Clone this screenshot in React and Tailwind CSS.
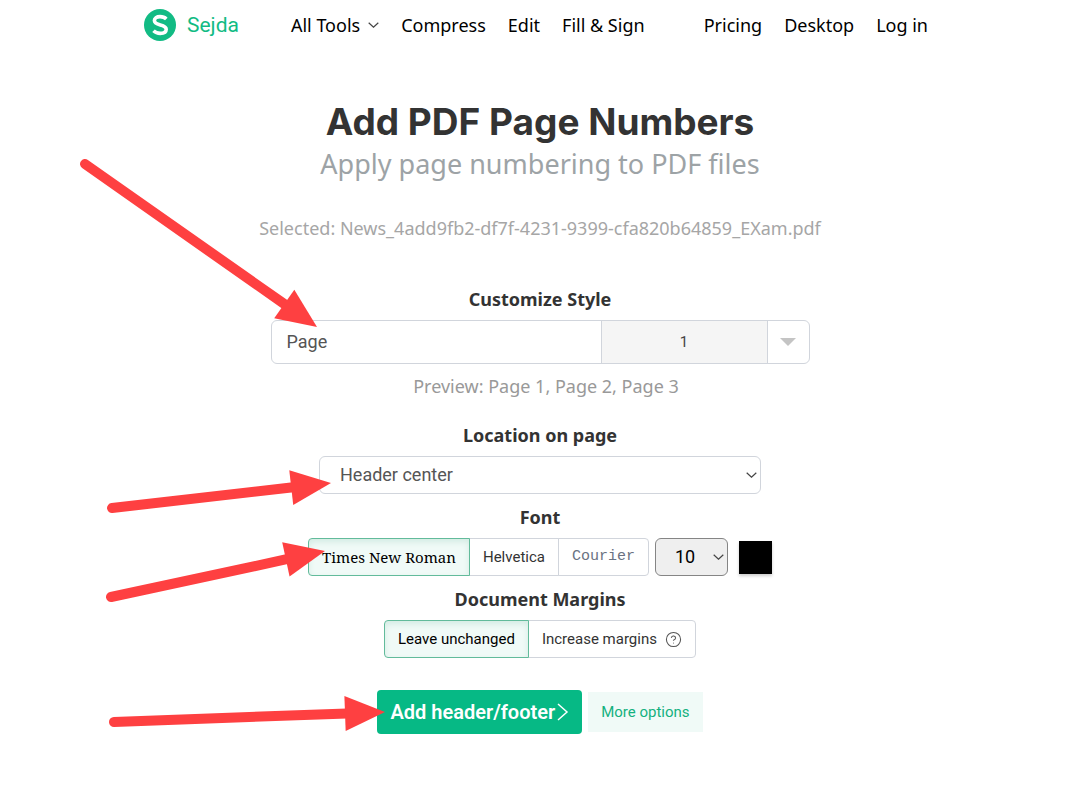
import React, { useState } from 'react';
import { CircleQuestionMark } from 'lucide-react';

const FONTS = [
  { name: 'Times New Roman', className: 'font-["Noto_Serif","Liberation_Serif",serif]' },
  { name: 'Helvetica', className: '' },
  { name: 'Courier', className: 'font-["Liberation_Mono",monospace] text-gray-500' },
];

const ARROWS = [
  { from: [85, 164], to: [317, 327] },
  { from: [112, 508], to: [331, 483] },
  { from: [111, 597], to: [325, 551] },
  { from: [114, 722], to: [385, 712] },
];

function Arrow({ from, to }) {
  const length = Math.hypot(to[0] - from[0], to[1] - from[1]);
  const angle = (Math.atan2(to[1] - from[1], to[0] - from[0]) * 180) / Math.PI;
  return (
    <g transform={`translate(${from[0]} ${from[1]}) rotate(${angle})`}>
      <line x1="0" y1="0" x2={length - 38} y2="0" stroke="#fe4041" strokeWidth="10" strokeLinecap="round" />
      <path d={`M${length} 0l-40-17.500v35z`} fill="#fe4041" />
    </g>
  );
}

function Chevron({ className }) {
  return (
    <svg className={`h-1.5 w-[11px] ${className}`} viewBox="0 0 11 6" fill="none" stroke="#444" strokeWidth="1.200" aria-hidden="true">
      <path d="M.7.7l4.800 4.500L10.300.7" />
    </svg>
  );
}

function NavLink({ children }) {
  return (
    <a href="#" className="flex items-center whitespace-nowrap hover:text-[#0fb881]">
      {children}
    </a>
  );
}

function Header() {
  return (
    <header className="mx-auto flex h-[50px] max-w-[792px] items-center pr-2 text-lg text-black font-['Noto_Sans',sans-serif]">
      <a href="#" className="mr-13 flex items-center gap-[11px] text-[21px] text-[#12bb84] font-['Roboto',sans-serif]">
        <svg className="size-8" viewBox="0 0 32 32" aria-hidden="true">
          <circle cx="16" cy="16" r="16" fill="#12bb84" />
          <path d="M22.300 9.900C20.600 8.200 18.500 7.600 16 7.600c-3.300 0-5.600 1.500-5.600 4 0 5.800 11.800 2.900 11.800 8.700 0 2.700-2.500 4.100-6 4.100-2.800 0-5-.9-6.700-2.600" fill="none" stroke="#fff" strokeWidth="3.600" />
        </svg>
        Sejda
      </a>
      <nav className="flex grow items-center gap-[22px]">
        <NavLink>
          All Tools
          <Chevron className="ml-2" />
        </NavLink>
        <NavLink>Compress</NavLink>
        <NavLink>Edit</NavLink>
        <NavLink>Fill &amp; Sign</NavLink>
      </nav>
      <nav className="flex items-center gap-[22px]">
        <NavLink>Pricing</NavLink>
        <NavLink>Desktop</NavLink>
        <NavLink>Log in</NavLink>
      </nav>
    </header>
  );
}

function SectionTitle({ as: Tag = 'label', children, ...props }) {
  return (
    <Tag className="mt-[9px] mb-[7px] block text-lg/7 font-bold text-[#333] font-['Noto_Sans',sans-serif]" {...props}>
      {children}
    </Tag>
  );
}

function App() {
  const [text, setText] = useState('Page');
  const [location, setLocation] = useState('Header center');
  const [font, setFont] = useState('Times New Roman');
  const [size, setSize] = useState('10');
  const [color, setColor] = useState('#000000');
  const [margins, setMargins] = useState('unchanged');

  const selected = 'z-10 border-[#62bb9b] bg-[#f0faf7] text-black shadow-[inset_0_3px_6px_#d3ebe3]';
  const unselected = 'border-gray-300 bg-white';

  return (
    <div className="relative min-h-screen overflow-hidden bg-white font-['Roboto',sans-serif] text-[#333]">
      <Header />

      <main className="mx-auto flex max-w-3xl flex-col items-center px-4 pt-[50px] pb-16 text-center">
        <h1 className="text-[37px]/11 font-bold text-[#333] font-['Inter',sans-serif]">Add PDF Page Numbers</h1>
        <h2 className="text-[27px]/10 text-[#9da3a6] font-['Noto_Sans',sans-serif]">Apply page numbering to PDF files</h2>
        <p className="mt-[30px] text-lg/7 text-[#a6a6a6] font-['Noto_Sans',sans-serif]">
          Selected: News_4add9fb2-df7f-4231-9399-cfa820b64859_EXam.pdf
        </p>

        {/* Style */}
        <div className="mt-[34px] w-full max-w-[539px]">
          <SectionTitle htmlFor="text">Customize Style</SectionTitle>
          <div className="flex h-11 rounded-md border border-gray-300">
            <input id="text" type="text" value={text} onChange={(e) => setText(e.target.value)} className="w-0 grow rounded-l-md px-[15px] text-lg text-[#555] outline-none" />
            <button type="button" className="w-[167px] border-x border-gray-300 bg-[#f5f5f5] text-[15px] text-[#444]">
              1
            </button>
            <button type="button" aria-label="Choose format" className="flex w-[41px] items-center justify-center">
              <svg className="h-2 w-4" viewBox="0 0 16 8" fill="#c4c4c4" aria-hidden="true">
                <path d="M0 0h16L8 8z" />
              </svg>
            </button>
          </div>
        </div>
        <p className="mt-2 pl-3 text-lg/7 text-[#999] font-['Noto_Sans',sans-serif]">Preview: Page 1, Page 2, Page 3</p>

        {/* Location */}
        <div className="mt-3 w-full max-w-[442px]">
          <SectionTitle htmlFor="location">Location on page</SectionTitle>
          <div className="relative">
            <select id="location" value={location} onChange={(e) => setLocation(e.target.value)} className="h-[38px] w-full appearance-none rounded-md border border-gray-300 bg-white px-5 text-lg/7 text-[#555]">
              <option>Header center</option>
            </select>
            <Chevron className="pointer-events-none absolute top-4 right-1" />
          </div>
        </div>

        {/* Font */}
        <SectionTitle htmlFor="size">Font</SectionTitle>
        <div className="flex items-center">
          <div className="flex h-[38px] text-[15px]">
            {FONTS.map((f) => (
              <button
                key={f.name}
                type="button"
                aria-pressed={font === f.name}
                onClick={() => setFont(f.name)}
                className={`border px-[13px] whitespace-nowrap not-first:-ml-px first:rounded-l-sm last:rounded-r-sm ${f.className} ${font === f.name ? selected : unselected}`}
              >
                {f.name}
              </button>
            ))}
          </div>
          <div className="relative ml-1.5">
            <select id="size" value={size} onChange={(e) => setSize(e.target.value)} className="h-[38px] w-[73px] appearance-none rounded-md border border-[#858585] bg-[#efefef] pl-[19px] text-lg/7 text-black">
              <option>10</option>
            </select>
            <Chevron className="pointer-events-none absolute top-4 right-1" />
          </div>
          <input
            type="color"
            aria-label="Font color"
            value={color}
            onChange={(e) => setColor(e.target.value)}
            className="ml-[11px] size-[33px] appearance-none bg-black shadow-[0_2px_3px_#ccc] [&::-webkit-color-swatch-wrapper]:p-0 [&::-webkit-color-swatch]:border-0"
          />
        </div>

        {/* Margins */}
        <SectionTitle as="h3">Document Margins</SectionTitle>
        <div className="flex h-[38px] text-[15px]">
          <button type="button" aria-pressed={margins === 'unchanged'} onClick={() => setMargins('unchanged')} className={`rounded-l-sm border px-[13px] ${margins === 'unchanged' ? selected : unselected}`}>
            Leave unchanged
          </button>
          <button type="button" aria-pressed={margins === 'increase'} onClick={() => setMargins('increase')} className={`-ml-px flex items-center gap-2 rounded-r-sm border px-[13px] ${margins === 'increase' ? selected : unselected}`}>
            Increase margins
            <CircleQuestionMark className="size-[17px] text-[#555]" strokeWidth={1.5} />
          </button>
        </div>

        <div className="mt-8 flex items-center gap-1.5">
          <button type="button" className="flex h-11 items-center rounded bg-[#06b985] px-[13px] text-xl font-semibold text-white">
            Add header/footer
            <svg className="ml-0.5 h-[18px] w-3" viewBox="0 0 12 18" fill="none" stroke="currentColor" strokeWidth="1.500" aria-hidden="true">
              <path d="M1 1l9 8-9 8" />
            </svg>
          </button>
          <button type="button" className="h-10 bg-[#f0faf7] px-[13px] text-[15px] text-[#14b17f]">
            More options
          </button>
        </div>
      </main>

      {/* Arrows pointing at the steps */}
      <svg className="pointer-events-none absolute top-0 left-1/2 z-20 h-[808px] w-[1080px] -translate-x-1/2" viewBox="0 0 1080 808" aria-hidden="true">
        {ARROWS.map((arrow, i) => (
          <Arrow key={i} {...arrow} />
        ))}
      </svg>
    </div>
  );
}

export default App;
